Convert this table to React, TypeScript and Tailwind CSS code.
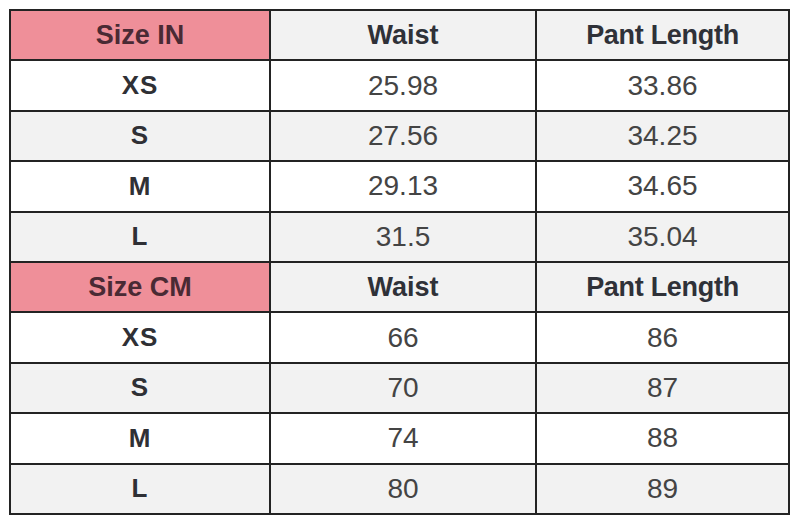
import React from "react";

type Row = { size: string; waist: string; len: string };

const inRows: Row[] = [
  { size: "XS", waist: "25.98", len: "33.86" },
  { size: "S", waist: "27.56", len: "34.25" },
  { size: "M", waist: "29.13", len: "34.65" },
  { size: "L", waist: "31.5", len: "35.04" },
];
const cmRows: Row[] = [
  { size: "XS", waist: "66", len: "86" },
  { size: "S", waist: "70", len: "87" },
  { size: "M", waist: "74", len: "88" },
  { size: "L", waist: "80", len: "89" },
];

const cell = "flex items-center justify-center h-[50.4px] border-r-2 border-b-2 border-[#232323]";

function Header({ label }: { label: string }) {
  return (
    <>
      <div className={`${cell} bg-[#ef8f99] font-bold text-[27px] text-[#4a2a34]`}>{label}</div>
      <div className={`${cell} bg-[#f2f2f2] font-bold text-[27px] text-[#2f3138]`}>Waist</div>
      <div className={`${cell} bg-[#f2f2f2] font-bold text-[27px] text-[#2f3138] tracking-[-0.3px]`}>Pant Length</div>
    </>
  );
}

function Rows({ rows }: { rows: Row[] }) {
  return (
    <>
      {rows.map((r, i) => {
        const bg = i % 2 === 0 ? "bg-white" : "bg-[#f2f2f2]";
        return (
          <React.Fragment key={r.size + i}>
            <div className={`${cell} ${bg} font-bold text-[26px] text-[#2f3035] tracking-[1px]`}>{r.size}</div>
            <div className={`${cell} ${bg} text-[28px] text-[#444444]`}>{r.waist}</div>
            <div className={`${cell} ${bg} text-[28px] text-[#444444]`}>{r.len}</div>
          </React.Fragment>
        );
      })}
    </>
  );
}

export default function App() {
  return (
    <div
      className="w-[794px] h-[525px] bg-white pt-[9px] pl-[9px]"
      style={{ fontFamily: '"Liberation Sans", Arial, sans-serif' }}
    >
      <div className="grid grid-cols-[260px_266px_253px] w-[781px] border-l-2 border-t-2 border-[#232323]">
        <Header label="Size IN" />
        <Rows rows={inRows} />
        <Header label="Size CM" />
        <Rows rows={cmRows} />
      </div>
    </div>
  );
}
